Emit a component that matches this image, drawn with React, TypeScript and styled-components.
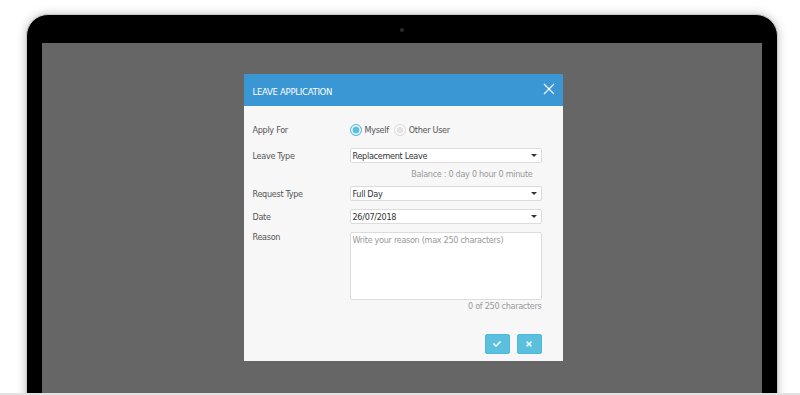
import React from "react";
import styled, { createGlobalStyle } from "styled-components";
import { FaCheck, FaTimes } from "react-icons/fa";

const GlobalStyle = createGlobalStyle`
  html, body {
    margin: 0;
    padding: 0;
    background: #fff;
  }
  body {
    font-family: "DejaVu Sans Condensed", "Liberation Sans", sans-serif;
    letter-spacing: -0.3px;
  }
`;

const App: React.FC = () => {
  return (
    <Page>
      <GlobalStyle />
      <Laptop>
        <Bezel>
          <Camera />
        </Bezel>
        <Screen>
          <Modal>
            <Header>
              <Title>LEAVE APPLICATION</Title>
              <Close>
                <svg width="12" height="12" viewBox="0 0 12 12">
                  <path d="M1 1 L11 11 M11 1 L1 11" stroke="#fff" strokeWidth="1.1" fill="none" />
                </svg>
              </Close>
            </Header>
            <Body>
              <Field top={17}>
                <Label>Apply For</Label>
                <Radios>
                  <RadioItem>
                    <Radio checked />
                    <span>Myself</span>
                  </RadioItem>
                  <RadioItem>
                    <Radio />
                    <span>Other User</span>
                  </RadioItem>
                </Radios>
              </Field>
              <Field top={11}>
                <Label>Leave Type</Label>
                <Select>
                  <span>Replacement Leave</span>
                  <Caret />
                </Select>
              </Field>
              <Hint top={6} right={9}>Balance : 0 day 0 hour 0 minute</Hint>
              <Field top={6}>
                <Label>Request Type</Label>
                <Select>
                  <span>Full Day</span>
                  <Caret />
                </Select>
              </Field>
              <Field top={8}>
                <Label>Date</Label>
                <Select>
                  <span>26/07/2018</span>
                  <Caret />
                </Select>
              </Field>
              <Field top={8} alignTop>
                <Label>Reason</Label>
                <TextArea placeholder="Write your reason (max 250 characters)" />
              </Field>
              <Hint top={1} right={0}>0 of 250 characters</Hint>
              <Footer>
                <ActionButton>
                  <FaCheck size={8} />
                </ActionButton>
                <ActionButton>
                  <FaTimes size={8} />
                </ActionButton>
              </Footer>
            </Body>
          </Modal>
        </Screen>
      </Laptop>
    </Page>
  );
};

const Page = styled.div`
  width: 800px;
  height: 395px;
  overflow: hidden;
  box-sizing: border-box;
  padding: 14px 22px 0 26px;
  border-bottom: 2px solid #e2e2e2;
`;
const Laptop = styled.div`
  height: 400px;
  background: #000;
  border: 1px solid #c8c8c8;
  border-radius: 22px 22px 0 0;
  box-shadow: 0 0 10px rgba(0, 0, 0, 0.25);
  padding: 0 15px;
  display: flex;
  flex-direction: column;
`;
const Bezel = styled.div`
  height: 28px;
  display: flex;
  align-items: center;
  justify-content: center;
`;
const Camera = styled.div`
  width: 4px;
  height: 4px;
  border-radius: 50%;
  background: #2a2a2a;
  margin-top: 2px;
`;
const Screen = styled.div`
  flex: 1;
  background: #666;
  display: flex;
  justify-content: center;
  align-items: flex-start;
  padding-top: 31px;
  padding-left: 2px;
`;
const Modal = styled.div`
  width: 319px;
  background: #f7f7f7;
`;
const Header = styled.div`
  height: 32px;
  background: #3a97d4;
  display: flex;
  align-items: center;
  justify-content: space-between;
  padding: 0 8px 0 9px;
`;
const Title = styled.div`
  color: #fff;
  font-size: 9.5px;
  padding-top: 3px;
`;
const Close = styled.div`
  display: flex;
  margin-top: -3px;
`;
const Body = styled.div`
  padding: 0 21px 7px 9px;
  display: flex;
  flex-direction: column;
`;
const Field = styled.div<{ top: number; alignTop?: boolean }>`
  display: flex;
  align-items: ${(p) => (p.alignTop ? "flex-start" : "center")};
  margin-top: ${(p) => p.top}px;
`;
const Label = styled.div`
  width: 97px;
  flex-shrink: 0;
  font-size: 9px;
  color: #555;
`;
const Radios = styled.div`
  display: flex;
  align-items: center;
  gap: 5px;
  height: 14px;
`;
const RadioItem = styled.div`
  display: flex;
  align-items: center;
  gap: 3px;
  font-size: 9px;
  color: #555;
`;
const Radio = styled.span<{ checked?: boolean }>`
  width: 12px;
  height: 12px;
  box-sizing: border-box;
  border-radius: 50%;
  border: 1px solid ${(p) => (p.checked ? "#5bc0de" : "#dcdcdc")};
  background: ${(p) => (p.checked ? "#5bc0de" : "#e4e4e4")};
  box-shadow: inset 0 0 0 1.5px #fff;
`;
const Select = styled.div`
  flex: 1;
  height: 15px;
  box-sizing: border-box;
  background: #fff;
  border: 1px solid #dcdcdc;
  border-radius: 2px;
  display: flex;
  align-items: center;
  justify-content: space-between;
  padding: 0 4px 0 2px;
  font-size: 9px;
  color: #333;
`;
const Caret = styled.span`
  width: 0;
  height: 0;
  border-left: 3px solid transparent;
  border-right: 3px solid transparent;
  border-top: 3px solid #333;
`;
const Hint = styled.div<{ top: number; right: number }>`
  align-self: flex-end;
  margin-top: ${(p) => p.top}px;
  margin-right: ${(p) => p.right}px;
  font-size: 9px;
  color: #999;
  line-height: 11px;
`;
const TextArea = styled.textarea`
  flex: 1;
  height: 68px;
  box-sizing: border-box;
  resize: none;
  border: 1px solid #dcdcdc;
  border-radius: 2px;
  background: #fff;
  padding: 2px 2px;
  font-family: inherit;
  letter-spacing: -0.3px;
  font-size: 9px;
  outline: none;
  &::placeholder {
    color: #999;
  }
`;
const Footer = styled.div`
  display: flex;
  justify-content: flex-end;
  gap: 7px;
  margin-top: 22px;
`;
const ActionButton = styled.button`
  width: 25px;
  height: 20px;
  border: 1px solid #4fb8d8;
  border-radius: 2px;
  background: #5bc0de;
  color: #fff;
  display: flex;
  align-items: center;
  justify-content: center;
  padding: 0;
`;

export default App;
